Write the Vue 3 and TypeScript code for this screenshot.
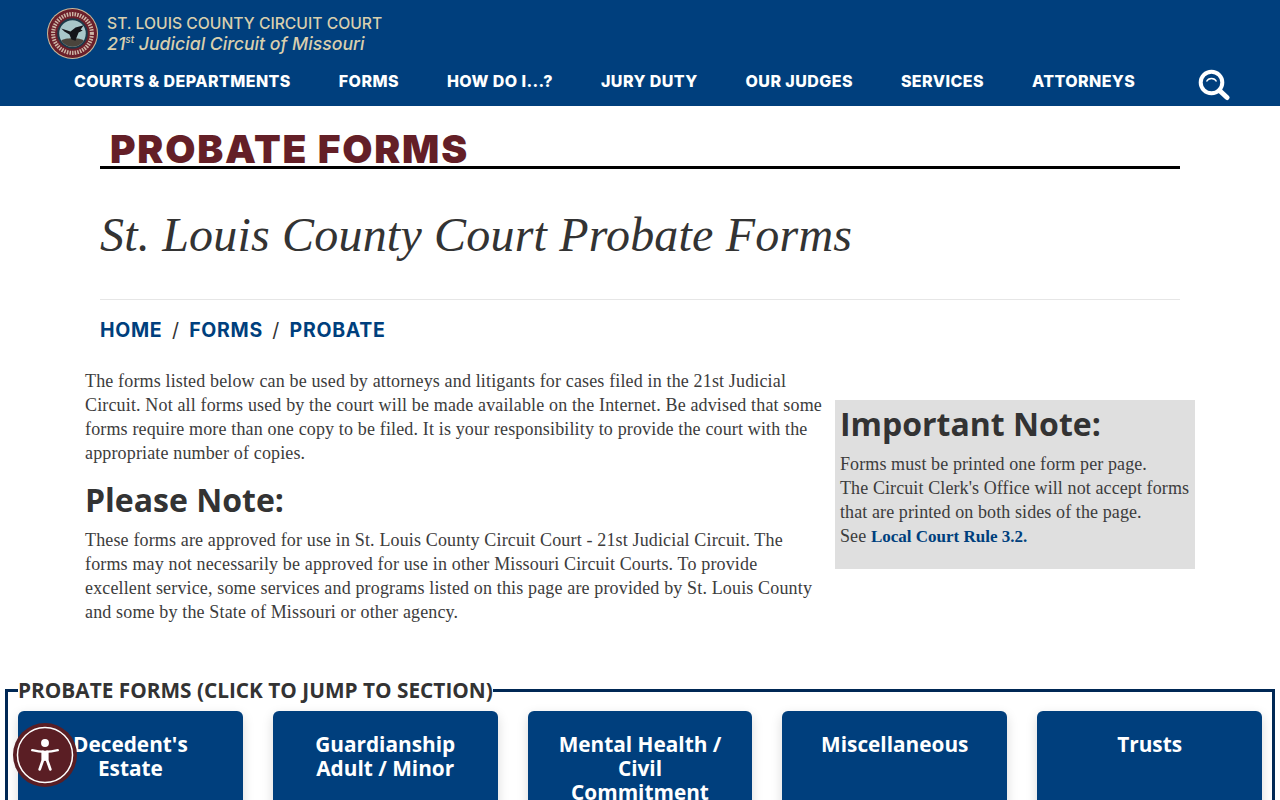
<script setup lang="ts">
const navItems: string[] = ['COURTS & DEPARTMENTS', 'FORMS', 'HOW DO I...?', 'JURY DUTY', 'OUR JUDGES', 'SERVICES', 'ATTORNEYS']
const crumbs: string[] = ['HOME', 'FORMS', 'PROBATE']
const cards: string[] = ["Decedent's Estate", 'Guardianship Adult / Minor', 'Mental Health / Civil Commitment', 'Miscellaneous', 'Trusts']
</script>

<template>
  <div class="page">
    <header class="header">
      <div class="brand">
        <svg class="seal" viewBox="0 0 50 50" aria-hidden="true">
          <circle cx="25" cy="25" r="25" fill="#c9b99a" />
          <circle cx="25" cy="25" r="24" fill="#6b1f2a" />
          <circle cx="25" cy="25" r="19" fill="none" stroke="#e6dcc6" stroke-width="4" stroke-dasharray="1.5 1.1" opacity=".8" />
          <circle cx="25" cy="25" r="15" fill="#1d3a4a" />
          <circle cx="25" cy="25" r="13" fill="#a9c6ca" />
          <path d="M14 32c3-3 19-3 22 0a13 13 0 0 1-22 0z" fill="#4a443c" />
          <path d="M14 20l9 3 5-4 8-2-3 4 2 1-4 2-2 5-1 3-4-1-2-5-5-3z" fill="#14141a" />
        </svg>
        <div class="brand-text">
          <div class="brand-top">ST. LOUIS COUNTY CIRCUIT COURT</div>
          <div class="brand-sub">21<sup>st</sup> Judicial Circuit of Missouri</div>
        </div>
      </div>
      <nav class="nav">
        <a v-for="item in navItems" :key="item" class="nav-link">{{ item }}</a>
        <svg class="search" viewBox="0 0 32 32" aria-label="Search">
          <circle cx="13.5" cy="13.5" r="10.8" fill="none" stroke="#fff" stroke-width="4" />
          <path d="M21.5 21.5L29 28.5" stroke="#fff" stroke-width="5" stroke-linecap="round" />
          <path d="M8.5 12.5c2-4 8-4 10 0" fill="none" stroke="#fff" stroke-width="1.3" />
        </svg>
      </nav>
    </header>

    <main>
      <div class="title-block">
        <h1 class="page-title">PROBATE FORMS</h1>
        <h2 class="subtitle">St. Louis County Court Probate Forms</h2>
        <hr class="rule" />
        <div class="crumbs">
          <template v-for="(c, i) in crumbs" :key="c">
            <span v-if="i > 0" class="sep">/</span>
            <a class="crumb">{{ c }}</a>
          </template>
        </div>
      </div>

      <section class="intro">
        <div class="intro-left">
          <p>The forms listed below can be used by attorneys and litigants for cases filed in the 21st Judicial Circuit. Not all forms used by the court will be made available on the Internet. Be advised that some forms require more than one copy to be filed. It is your responsibility to provide the court with the appropriate number of copies.</p>
          <h3 class="note-title">Please Note:</h3>
          <p>These forms are approved for use in St. Louis County Circuit Court - 21st Judicial Circuit. The forms may not necessarily be approved for use in other Missouri Circuit Courts. To provide excellent service, some services and programs listed on this page are provided by St. Louis County and some by the State of Missouri or other agency.</p>
        </div>
        <aside class="important">
          <h3 class="important-title">Important Note:</h3>
          <p>Forms must be printed one form per page.<br />The Circuit Clerk's Office will not accept forms that are printed on both sides of the page.<br />See <a class="rule-link">Local Court Rule 3.2.</a></p>
        </aside>
      </section>

      <fieldset class="forms">
        <legend class="forms-legend">PROBATE FORMS (CLICK TO JUMP TO SECTION)</legend>
        <div class="cards">
          <a v-for="c in cards" :key="c" class="card">{{ c }}</a>
        </div>
      </fieldset>
    </main>

    <button class="a11y" aria-label="Accessibility">
      <svg viewBox="0 0 60 60" width="64" height="64" aria-hidden="true">
        <circle cx="30" cy="30" r="25.800" fill="none" stroke="#fff" stroke-width="1.400" />
        <circle cx="30" cy="18.700" r="3.700" fill="#fff" />
        <path d="M18 25.500c4 1 8 1.500 12 1.500s8-.5 12-1.500" fill="none" stroke="#fff" stroke-width="2.200" stroke-linecap="round" />
        <path d="M28 27v8l-3 8.500M32 27v8l3 8.500" fill="none" stroke="#fff" stroke-width="2.600" stroke-linecap="round" />
        <path d="M27 26.500h6v9h-6z" fill="#fff" />
      </svg>
    </button>
  </div>
</template>

<style>
html, body { margin: 0; overflow: hidden; background: #fff; }
</style>

<style scoped>
.page { font-family: "Liberation Serif", serif; color: #333; height: 800px; overflow: hidden; }
.header { background: #003f7d; height: 106px; box-sizing: border-box; padding: 8px 0 0 47px; }
.brand { display: flex; align-items: center; gap: 9px; height: 50px; }
.seal { width: 51px; height: 51px; flex: none; }
.brand-text { color: #d9cfae; font-family: Inter, sans-serif; }
.brand-top { font-size: 15.7px; line-height: 20px; font-weight: 500; white-space: nowrap; }
.brand-sub { font-size: 17.7px; line-height: 19px; font-style: italic; font-weight: 500; white-space: nowrap; }
.brand-sub sup { font-size: 10px; line-height: 0; }
.nav { display: flex; align-items: center; margin: 7px 0 0 27px; gap: 48px; height: 32px; }
.nav-link { color: #fff; font-family: Inter, sans-serif; font-weight: 800; font-size: 16px; letter-spacing: .42px; line-height: 32px; white-space: nowrap; }
.search { width: 32px; height: 32px; margin: 8px 0 0 15px; flex: none; }

.title-block { margin: 0 100px; }
.page-title { margin: 0; height: 63px; box-sizing: border-box; padding: 19px 0 0 10px; border-bottom: 3px solid #000; font-family: Inter, sans-serif; font-weight: 900; font-size: 39px; letter-spacing: 1.75px; line-height: 47px; color: #641f27; white-space: nowrap; }
.subtitle { margin: 37px 0 0; font-weight: 400; font-style: italic; font-size: 48px; letter-spacing: .2px; line-height: 58px; color: #333; }
.rule { margin: 35px 0 0; border: 0; border-top: 1px solid #e6e6e6; }
.crumbs { display: flex; align-items: center; gap: 9.5px; margin-top: 16px; font-family: Inter, sans-serif; font-size: 19.5px; letter-spacing: .7px; line-height: 28px; font-weight: 700; }
.crumb { color: #003f7d; }
.sep { color: #333; font-weight: 400; }

.intro { display: flex; margin: 25px 85px 0; gap: 10px; }
.intro-left { width: 740px; flex: none; }
.intro p { margin: 0; font-size: 18px; letter-spacing: .15px; line-height: 24px; color: #3c3c3c; }
.note-title { margin: 16px 0 9px; font-family: "Open Sans", sans-serif; font-size: 32px; line-height: 38px; font-weight: 700; color: #333; }
.important { box-sizing: border-box; width: 360px; height: 169px; margin-top: 31px; padding: 4px 0 5px 5px; background: #dfdfdf; }
.important-title { margin: 0 0 8px; font-family: "Open Sans", sans-serif; font-size: 32px; line-height: 40px; font-weight: 700; color: #333; }
.important p { letter-spacing: .1px; }
.rule-link { color: #003f7d; font-weight: 700; font-size: 17px; letter-spacing: 0; }

.forms { margin: 53px 5px 0; padding: 7px 10px 0; border: 3px solid #002855; min-width: 0; }
.forms-legend { padding: 0; font-family: "Open Sans", sans-serif; font-size: 20.8px; line-height: 27px; font-weight: 700; color: #333; white-space: nowrap; }
.cards { display: flex; gap: 30px; }
.card { box-sizing: border-box; width: 224.8px; height: 130px; padding: 21px 30px; flex: none; background: #003f7d; color: #fff; border-radius: 6px; box-shadow: 0 4px 12px rgba(0,0,0,.15); font-family: "Open Sans", sans-serif; font-size: 20.8px; line-height: 24px; font-weight: 700; text-align: center; }

.a11y { position: fixed; left: 13px; top: 723px; width: 64px; height: 64px; padding: 0; border: 0; border-radius: 50%; background: #5a1e24; display: flex; align-items: center; justify-content: center; }
</style>
